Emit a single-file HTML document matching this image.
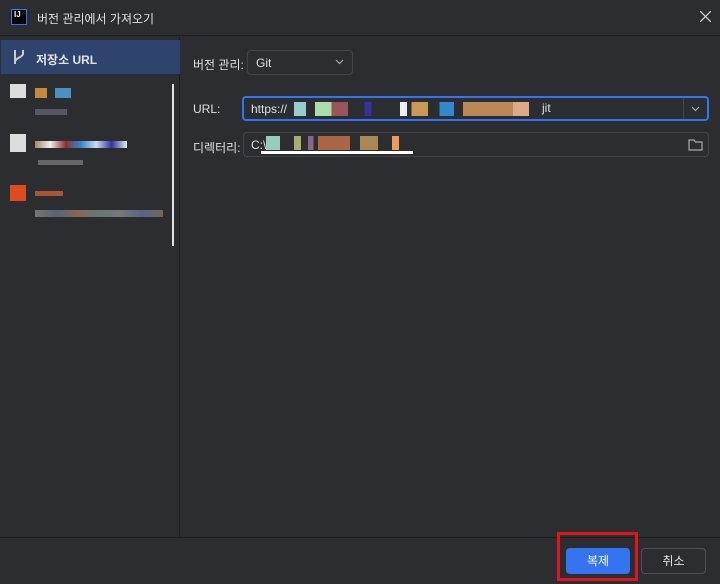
<!DOCTYPE html><html><head><meta charset="utf-8"><style>
*{box-sizing:border-box;margin:0;padding:0}
body{width:720px;height:584px;background:#2b2d30;font-family:"Liberation Sans","Noto Sans CJK KR",sans-serif;color:#dfe1e5;font-size:12px;position:relative;overflow:hidden}
.a{position:absolute}
.b{position:absolute;height:14px}
</style></head><body>
<div class="a" style="left:0;top:0;width:720px;height:36px;background:#2b2d30;border-bottom:1px solid #1e1f22"></div>
<div class="a" style="left:11px;top:9px;width:16px;height:16px;background:#000;border:1px solid #3574f0;color:#fff;font-size:8px;font-weight:bold;line-height:10px;padding-left:2px">IJ</div>
<div class="a" style="left:37px;top:10px;font-size:12px">버전 관리에서 가져오기</div>
<svg class="a" style="left:700px;top:11px" width="11" height="11"><g stroke="#ccc" stroke-width="1.3"><line x1="0" y1="0" x2="11" y2="11"/><line x1="11" y1="0" x2="0" y2="11"/></g></svg>
<div class="a" style="left:0;top:37px;width:180px;height:500px;background:#2b2d30;border-right:1px solid #1e1f22"></div>
<div class="a" style="left:1px;top:40px;width:179px;height:34px;background:#2e436e"></div>
<svg class="a" style="left:12px;top:48px" width="14" height="18"><g stroke="#ccc" stroke-width="2" fill="none"><line x1="3" y1="2" x2="3" y2="16"/><path d="M11 2v4c0 3-8 4-8 8"/></g></svg>
<div class="a" style="left:36px;top:51px;font-weight:bold">저장소 URL</div>
<div class="a" style="left:172px;top:84px;width:2px;height:162px;background:#dfe1e5"></div>
<div class="a" style="left:10px;top:84px;width:16px;height:14px;background:#ddd"></div>
<div class="b" style="left:35px;top:88px;width:12px;height:10px;background:#c08a40"></div>
<div class="b" style="left:55px;top:88px;width:16px;height:10px;background:#4a90c0"></div>
<div class="b" style="left:35px;top:109px;width:32px;height:6px;background:#556"></div>
<div class="a" style="left:10px;top:134px;width:16px;height:18px;background:#ddd"></div>
<div class="b" style="left:35px;top:141px;width:92px;height:7px;background:linear-gradient(90deg,#a86,#eee,#833,#38c,#cde,#339,#dee)"></div>
<div class="b" style="left:38px;top:160px;width:45px;height:5px;background:#666"></div>
<div class="a" style="left:10px;top:185px;width:16px;height:16px;background:#e04a20"></div>
<div class="b" style="left:35px;top:191px;width:28px;height:5px;background:#a53"></div>
<div class="b" style="left:35px;top:210px;width:128px;height:7px;background:linear-gradient(90deg,#776,#567,#865,#677,#777,#568,#765)"></div>
<div class="a" style="left:193px;top:56px">버전 관리:</div>
<div class="a" style="left:247px;top:50px;width:106px;height:25px;border:1px solid #43454a;border-radius:4px;background:#2b2d30;padding:5px 8px">Git</div>
<svg class="a" style="left:335px;top:59px" width="9" height="6"><path d="M1 1l3.5 3.5L8 1" stroke="#aaa" stroke-width="1.2" fill="none"/></svg>
<div class="a" style="left:193px;top:102px">URL:</div>
<div class="a" style="left:242px;top:96px;width:467px;height:25px;border:2px solid #3574f0;border-radius:4px;background:#2b2d30;padding:4px 7px">https://</div>
<div class="a" style="left:683px;top:98px;width:1px;height:21px;background:#43454a"></div>
<svg class="a" style="left:691px;top:106px" width="9" height="6"><path d="M1 1l3.5 3.5L8 1" stroke="#aaa" stroke-width="1.2" fill="none"/></svg>
<div class="b" style="left:294px;top:102px;width:235px;background:linear-gradient(90deg,#9cc 0 5%,#2b2d30 5% 9%,#ada 9% 16%,#955 16% 23%,#2b2d30 23% 30%,#339 30% 33%,#2b2d30 33% 45%,#eee 45% 48%,#2b2d30 48% 50%,#c95 50% 57%,#2b2d30 57% 62%,#38c 62% 68%,#2b2d30 68% 72%,#b85 72% 97%,#2b2d30 97%)"></div>
<div class="b" style="left:513px;top:102px;width:16px;background:#da8"></div>
<div class="a" style="left:542px;top:101px">jit</div>
<div class="a" style="left:193px;top:139px">디렉터리:</div>
<div class="a" style="left:243px;top:132px;width:466px;height:25px;border:1px solid #43454a;border-radius:4px;padding:5px 7px">C:\</div>
<div class="b" style="left:266px;top:136px;width:140px;background:linear-gradient(90deg,#9cb 0 10%,#2b2d30 10% 20%,#aa7 20% 25%,#2b2d30 25% 30%,#868 30% 34%,#2b2d30 34% 37%,#a64 37% 60%,#2b2d30 60% 67%,#a85 67% 80%,#2b2d30 80% 90%,#e95 90% 95%,#2b2d30 95%)"></div>
<div class="a" style="left:261px;top:151px;width:152px;height:3px;background:#fff"></div>
<svg class="a" style="left:688px;top:138px" width="15" height="13"><path d="M1 2h5l1.5 2H14v8H1z" stroke="#aaa" stroke-width="1.2" fill="none"/></svg>
<div class="a" style="left:0;top:537px;width:720px;height:1px;background:#1e1f22"></div>
<div class="a" style="left:557px;top:532px;width:81px;height:49px;border:3px solid #e0151b"></div>
<div class="a" style="left:566px;top:548px;width:64px;height:26px;background:#3574f0;border-radius:4px;color:#fff;text-align:center;line-height:26px">복제</div>
<div class="a" style="left:641px;top:548px;width:65px;height:26px;border:1px solid #4e5157;border-radius:4px;text-align:center;line-height:24px">취소</div>
</body></html>
